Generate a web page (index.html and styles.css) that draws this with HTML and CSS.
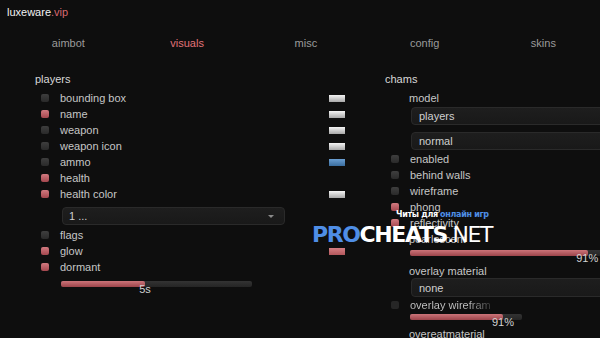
FILE: index.html
```html
<!DOCTYPE html>
<html>
<head>
<meta charset="utf-8">
<link rel="stylesheet" href="styles.css">
</head>
<body>
<div class="menu">
  <div class="title">luxeware<span class="accent">.vip</span></div>
  <nav class="tabs">
    <div class="tab">aimbot</div>
    <div class="tab active">visuals</div>
    <div class="tab">misc</div>
    <div class="tab">config</div>
    <div class="tab">skins</div>
  </nav>
  <div class="content">
    <section class="col left">
      <div class="group">players</div>
      <div class="row"><span class="cb"></span><span class="lbl">bounding box</span><span class="sw white"></span></div>
      <div class="row"><span class="cb on"></span><span class="lbl">name</span><span class="sw white"></span></div>
      <div class="row"><span class="cb"></span><span class="lbl">weapon</span><span class="sw white"></span></div>
      <div class="row"><span class="cb"></span><span class="lbl">weapon icon</span><span class="sw white"></span></div>
      <div class="row"><span class="cb"></span><span class="lbl">ammo</span><span class="sw blue"></span></div>
      <div class="row"><span class="cb on"></span><span class="lbl">health</span></div>
      <div class="row"><span class="cb on"></span><span class="lbl">health color</span><span class="sw white"></span></div>
      <div class="dd dd-left"><span>1 ...</span><span class="arrow"></span></div>
      <div class="row"><span class="cb"></span><span class="lbl">flags</span></div>
      <div class="row"><span class="cb on"></span><span class="lbl">glow</span><span class="sw pink"></span></div>
      <div class="row"><span class="cb on"></span><span class="lbl">dormant</span></div>
      <div class="slider s-left"><div class="fill" style="width:44%"></div><span class="val" style="left:44%">5s</span></div>
    </section>
    <section class="col right">
      <div class="group">chams</div>
      <div class="row"><span class="lbl">model</span></div>
      <div class="dd dd-right"><span>players</span></div>
      <div class="dd dd-right dd-2"><span>normal</span></div>
      <div class="row r2"><span class="cb"></span><span class="lbl">enabled</span></div>
      <div class="row"><span class="cb"></span><span class="lbl">behind walls</span></div>
      <div class="row"><span class="cb"></span><span class="lbl">wireframe</span></div>
      <div class="row"><span class="cb on"></span><span class="lbl">phong</span></div>
      <div class="row"><span class="cb on"></span><span class="lbl">reflectivity</span></div>
      <div class="row"><span class="lbl">pearlescent</span></div>
      <div class="slider s-r1"><div class="fill" style="width:91%"></div><span class="val" style="left:91%">91%</span></div>
      <div class="row r-om"><span class="lbl">overlay material</span></div>
      <div class="dd dd-right dd-3"><span>none</span></div>
      <div class="row r-ow"><span class="cb dark"></span><span class="lbl fade">overlay wirefram</span></div>
      <div class="slider s-r2"><div class="fill" style="width:83%"></div><span class="val" style="left:83%">91%</span></div>
      <div class="row r-last"><span class="lbl">overeatmaterial</span></div>
    </section>
  </div>
  <div class="wm-sub"><b>Читы для</b> <span class="blue-t">онлайн игр</span></div>
  <div class="wm"><span class="pro">PRO</span><span class="ch">CHEATS</span><span class="net">.NET</span></div>
</div>
</body>
</html>
```
FILE: styles.css
```css
html, body {
  margin: 0;
  padding: 0;
  background: #0e0e0e;
  overflow: hidden;
}
.menu {
  position: relative;
  width: 600px;
  height: 338px;
  overflow: hidden;
  font-family: "Liberation Sans", Arial, sans-serif;
  font-size: 11px;
  color: #c6c6c6;
}
.title {
  padding: 5px 0 0 7px;
  height: 14px;
  line-height: 14px;
  color: #f2f2f2;
  font-size: 11px;
}
.accent { color: #d9686f; }
.tabs {
  display: grid;
  grid-template-columns: repeat(5, 118.75px);
  margin: 17px 0 0 9px;
  height: 14px;
  line-height: 14px;
}
.tab {
  text-align: center;
  color: #9b9b9b;
}
.tab.active { color: #e07379; }
.content {
  display: flex;
  margin-top: 22px;
}
.col {
  display: flex;
  flex-direction: column;
}
.left {
  flex: none;
  width: 310px;
  padding-left: 35px;
  margin-right: 40px;
}
.right {
  flex: none;
  width: 215px;
}
.group {
  height: 14px;
  line-height: 14px;
  color: #d8d8d8;
  margin-bottom: 4px;
}
.row {
  display: flex;
  align-items: center;
  height: 16px;
  white-space: nowrap;
}
.cb {
  width: 8px;
  height: 8px;
  border-radius: 2px;
  background: linear-gradient(#3e3e3e, #2a2a2a);
  margin-left: 6px;
  margin-right: 11px;
  flex: none;
}
.cb.on { background: linear-gradient(#d27a80, #a4474e); }
.cb.dark { background: #262626; }
.left .lbl { flex: 1; }
.right .row .lbl { margin-left: 24px; }
.right .row .cb + .lbl { margin-left: 0; }
.sw {
  width: 16px;
  height: 7px;
  flex: none;
}
.sw.white { background: linear-gradient(#f4f4f4, #a8a8a8); }
.sw.blue { background: linear-gradient(#6a9ed2, #3a6d9e); }
.sw.pink { background: linear-gradient(#d57e82, #b2575c); }
.dd {
  display: flex;
  align-items: center;
  justify-content: space-between;
  box-sizing: border-box;
  height: 18px;
  background: linear-gradient(#1e1e1e, #191919);
  border: 1px solid #2a2a2a;
  border-radius: 4px;
  padding: 0 10px 0 6px;
  color: #cfcfcf;
  flex: none;
}
.dd-left {
  width: 223px;
  margin: 5px 0 2px 27px;
}
.arrow {
  width: 0;
  height: 0;
  border-left: 3px solid transparent;
  border-right: 3px solid transparent;
  border-top: 3px solid #8a8a8a;
}
.dd-right {
  width: 200px;
  margin: 1px 0 0 26px;
  padding-left: 7px;
}
.dd-2 { margin-top: 7px; }
.r2 { margin-top: 1px; }
.slider {
  position: relative;
  height: 6px;
  background: linear-gradient(#333, #252525);
  border-radius: 2px;
  flex: none;
}
.fill {
  height: 100%;
  border-radius: 2px;
  background: linear-gradient(#cc7479, #9c444a);
}
.val {
  position: absolute;
  top: 2px;
  transform: translateX(-50%);
  line-height: 12px;
  color: #d2d2d2;
}
.s-left {
  width: 191px;
  margin: 6px 0 0 26px;
}
.s-r1 {
  width: 196px;
  margin: 3px 0 0 25px;
}
.s-r1 .val { transform: translateX(-55%); }
.r-om { margin-top: 7px; height: 15px; }
.dd-3 { margin-top: 0; height: 19px; }
.r-ow { margin-top: 0; }
.lbl.fade {
  background: linear-gradient(90deg, #c6c6c6 70%, #333 100%);
  -webkit-background-clip: text;
  background-clip: text;
  color: transparent;
}
.s-r2 {
  width: 112px;
  margin: 1px 0 0 25px;
}
.r-last { margin-top: 6px; }
.wm-sub {
  position: absolute;
  left: 396px;
  top: 210px;
  font-family: "DejaVu Sans", sans-serif;
  font-size: 8px;
  color: #ffffff;
  letter-spacing: -0.3px;
}
.wm-sub b { font-weight: bold; }
.blue-t { color: #4f8ee6; font-weight: bold; }
.wm {
  position: absolute;
  left: 312px;
  top: 221px;
  font-family: "DejaVu Sans", sans-serif;
  font-size: 22px;
  line-height: 28px;
  letter-spacing: -1.4px;
  color: #ffffff;
}
.pro { color: #4f8ee6; font-weight: bold; }
.ch { font-weight: bold; }
.net { font-weight: normal; }
```
